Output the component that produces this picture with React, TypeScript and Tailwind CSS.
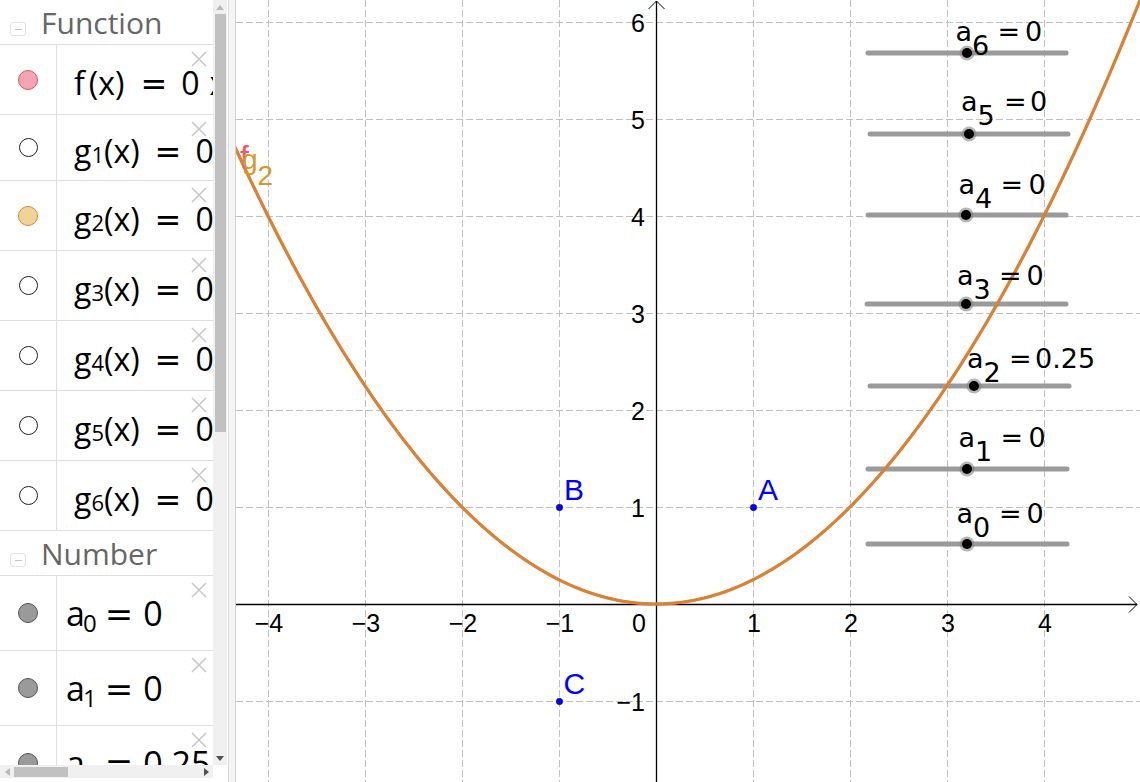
import React from 'react'

// graph coordinates: origin and pixels per unit
const OX = 656
const OY = 604
const U = 97

const sx = (x: number) => OX + x * U
const sy = (y: number) => OY - y * U

function parabola() {
  const d: string[] = []
  for (let i = 0; i <= 240; i++) {
    const x = -4.4 + (9.5 * i) / 240
    d.push(`${i === 0 ? 'M' : 'L'}${sx(x).toFixed(2)},${sy(0.25 * x * x).toFixed(2)}`)
  }
  return d.join(' ')
}

type CircleKind = 'f' | 'empty' | 'g2' | 'num'

const circleClass: Record<CircleKind, string> = {
  f: 'w-[20px] h-[20px] rounded-full bg-[#f6a4b1] border border-[#e0506a]',
  empty: 'w-[19px] h-[19px] rounded-full bg-white border border-[#222]',
  g2: 'w-[20px] h-[20px] rounded-full bg-[#ecd49b] border border-[#d98a2c]',
  num: 'w-[20px] h-[20px] rounded-full bg-[#9a9a9a] border border-[#555]',
}

const fnRows = [
  { h: 'h-[70px]', circle: 'f' as CircleKind, sub: '' },
  { h: 'h-[66px]', circle: 'empty' as CircleKind, sub: '1' },
  { h: 'h-[70px]', circle: 'g2' as CircleKind, sub: '2' },
  { h: 'h-[70px]', circle: 'empty' as CircleKind, sub: '3' },
  { h: 'h-[70px]', circle: 'empty' as CircleKind, sub: '4' },
  { h: 'h-[70px]', circle: 'empty' as CircleKind, sub: '5' },
  { h: 'h-[70px]', circle: 'empty' as CircleKind, sub: '6' },
]

const numRows = [
  { sub: '0', val: '0' },
  { sub: '1', val: '0' },
  { sub: '2', val: '0.25' },
]

const sliders = [
  { sub: '6', val: '0', y: 53, x1: 868, x2: 1066, dot: 967, ax: 955.5, base: 41, eq: 997.5, vx: 1025 },
  { sub: '5', val: '0', y: 134, x1: 870, x2: 1068, dot: 969, ax: 961, base: 111, eq: 1004, vx: 1030 },
  { sub: '4', val: '0', y: 215, x1: 868, x2: 1066, dot: 966, ax: 958.5, base: 194, eq: 1000.5, vx: 1028.5 },
  { sub: '3', val: '0', y: 304, x1: 867, x2: 1066, dot: 966, ax: 957, base: 285, eq: 999, vx: 1026.5 },
  { sub: '2', val: '0.25', y: 386, x1: 870, x2: 1069, dot: 974, ax: 967, base: 368, eq: 1009, vx: 1035 },
  { sub: '1', val: '0', y: 469, x1: 868, x2: 1067, dot: 967, ax: 958.5, base: 447, eq: 1000.5, vx: 1028.5 },
  { sub: '0', val: '0', y: 544, x1: 868, x2: 1067, dot: 967, ax: 956.5, base: 523, eq: 999, vx: 1026.5 },
]

function CloseX() {
  return (
    <svg className="absolute top-[6px] right-[6px]" width="16" height="16" viewBox="0 0 16 16">
      <path d="M1 1L15 15M15 1L1 15" stroke="#c8c8c8" strokeWidth="1.6" />
    </svg>
  )
}

function Header({ title, className }: { title: string; className: string }) {
  return (
    <div className={`flex items-start border-b border-[#dedede] pl-[10px] ${className}`}>
      <div className="mt-[22px] w-[16px] h-[14px] rounded-[3px] border border-[#e2e2e2] flex items-center justify-center">
        <div className="w-[7px] h-[1px] bg-[#c4c4c4]" />
      </div>
      <div className="ml-[15px] pt-[8px] leading-[30px] text-[30px] text-[#666] font-['Open_Sans',sans-serif]">
        {title}
      </div>
    </div>
  )
}

function Row({ className, circle, children }: { className: string; circle: CircleKind; children: React.ReactNode }) {
  return (
    <div className={`flex shrink-0 border-b border-[#dedede] ${className}`}>
      <div className="w-[57px] shrink-0 border-r border-[#dedede] flex items-center justify-center">
        <div className={circleClass[circle]} />
      </div>
      <div className="relative flex-1 flex items-center overflow-hidden">
        {children}
        <CloseX />
      </div>
    </div>
  )
}

function AlgebraPanel() {
  return (
    <div className="flex flex-col w-[227px] h-full shrink-0">
      <div className="flex h-[765px]">
        <div className="w-[213px] h-full overflow-hidden flex flex-col">
          <Header title="Function" className="h-[45px] shrink-0" />
          {fnRows.map((r, i) => (
            <Row key={i} className={r.h} circle={r.circle}>
              <div className="flex items-baseline whitespace-nowrap pl-[17px] pt-[8px] text-[32px] leading-none text-black font-['Open_Sans',sans-serif]">
                {r.sub === '' ? (
                  <>
                    <span>f</span>
                    <span className="ml-[4px]">(x)</span>
                    <span className="ml-[16px] font-['DejaVu_Sans',sans-serif]">=</span>
                    <span className="ml-[14px]">0</span>
                    <span className="ml-[10px]">x</span>
                  </>
                ) : (
                  <>
                    <span>g</span>
                    <span className="text-[22px]">{r.sub}</span>
                    <span>(x)</span>
                    <span className="ml-[15px] font-['DejaVu_Sans',sans-serif]">=</span>
                    <span className="ml-[14px]">0</span>
                  </>
                )}
              </div>
            </Row>
          ))}
          <Header title="Number" className="h-[45px] shrink-0" />
          {numRows.map((r, i) => (
            <Row key={i} className="h-[75px]" circle="num">
              <div className="flex items-baseline whitespace-nowrap pl-[9px] text-[34px] leading-none text-black font-['Open_Sans',sans-serif]">
                <span>a</span>
                <span className="text-[24px] translate-y-[6px] -ml-[2px]">{r.sub}</span>
                <span className="ml-[8px] font-['DejaVu_Sans',sans-serif]">=</span>
                <span className="ml-[10px]">{r.val}</span>
              </div>
            </Row>
          ))}
        </div>
        {/* vertical scrollbar */}
        <div className="w-[14px] h-full bg-[#f0f0f0] flex flex-col items-center">
          <div className="h-[14px] flex items-center justify-center">
            <svg width="8" height="5" viewBox="0 0 8 5"><path d="M0 5L4 0L8 5Z" fill="#b9b9b9" /></svg>
          </div>
          <div className="w-[11px] h-[418px] bg-[#c1c1c1]" />
          <div className="flex-1" />
          <div className="h-[14px] flex items-center justify-center">
            <svg width="8" height="5" viewBox="0 0 8 5"><path d="M0 0L8 0L4 5Z" fill="#505050" /></svg>
          </div>
        </div>
      </div>
      {/* horizontal scrollbar */}
      <div className="flex h-[17px]">
        <div className="w-[213px] h-[13px] bg-[#f0f0f0] flex items-center">
          <div className="w-[14px] flex items-center justify-center">
            <svg width="5" height="8" viewBox="0 0 5 8"><path d="M5 0L0 4L5 8Z" fill="#b9b9b9" /></svg>
          </div>
          <div className="w-[54px] h-[10px] bg-[#c1c1c1]" />
          <div className="flex-1" />
          <div className="w-[14px] flex items-center justify-center">
            <svg width="5" height="8" viewBox="0 0 5 8"><path d="M0 0L5 4L0 8Z" fill="#505050" /></svg>
          </div>
        </div>
        <div className="w-[14px]" />
      </div>
    </div>
  )
}

function Divider() {
  return (
    <div className="flex w-[9px] h-full shrink-0">
      <div className="w-[1px] bg-white" />
      <div className="w-[1px] bg-[#dcdcdc]" />
      <div className="w-[6px] bg-[#f4f4f4]" />
      <div className="w-[1px] bg-[#d2d2d2]" />
    </div>
  )
}

function Graphics() {
  const xs = [-4, -3, -2, -1, 1, 2, 3, 4]
  const ys = [-1, 1, 2, 3, 4, 5, 6]
  const curve = parabola()
  const axisFont = { fontFamily: '"Liberation Sans", Arial, sans-serif', fontSize: 25 }
  return (
    <div className="flex-1 h-full bg-white overflow-hidden">
      <svg width="904" height="782" viewBox="236 0 904 782">
        {/* grid */}
        <g stroke="#c0c0c0" strokeWidth="1" strokeDasharray="7 3">
          {xs.map((k) => (
            <line key={`vx${k}`} x1={sx(k) + 0.5} y1={0} x2={sx(k) + 0.5} y2={782} />
          ))}
          {ys.map((k) => (
            <line key={`hy${k}`} x1={236} y1={sy(k) + 0.5} x2={1140} y2={sy(k) + 0.5} />
          ))}
        </g>

        {/* axes */}
        <g stroke="#000" strokeWidth="1.3" fill="none">
          <line x1={236} y1={OY + 0.5} x2={1137} y2={OY + 0.5} />
          <line x1={OX + 0.5} y1={782} x2={OX + 0.5} y2={1} />
          <path d="M1129 596.5L1137 604.5L1129 612.5" strokeWidth="1" />
          <path d="M648.5 9L656.5 1L664.5 9" strokeWidth="1" />
        </g>

        {/* axis numbers */}
        <g {...axisFont} fill="#000">
          {xs.map((k) => (
            <text key={`lx${k}`} x={sx(k) + 1} y={632} textAnchor="middle">
              {k < 0 ? `\u2212${-k}` : `${k}`}
            </text>
          ))}
          <text x={639} y={632} textAnchor="middle">0</text>
          {ys.map((k) => (
            <text key={`ly${k}`} x={645} y={sy(k) + 10} textAnchor="end">
              {k < 0 ? `\u2212${-k}` : `${k}`}
            </text>
          ))}
        </g>

        {/* sliders */}
        {sliders.map((s) => (
          <g key={s.sub}>
            <line x1={s.x1} y1={s.y} x2={s.x2} y2={s.y} stroke="#9a9a9a" strokeWidth="5" strokeLinecap="round" />
            <circle cx={s.dot} cy={s.y} r="7.5" fill="#7a7a7a" fillOpacity="0.55" />
            <circle cx={s.dot} cy={s.y} r="5" fill="#000" />
          </g>
        ))}

        {/* f under g2 */}
        <path d={curve} stroke="#ec6a80" strokeWidth="3.2" fill="none" />
        <path d={curve} stroke="#d4891c" strokeWidth="2.4" fill="none" />

        {/* slider captions */}
        <g fontFamily='"DejaVu Sans", Verdana, sans-serif' fontSize="27" fill="#000">
          {sliders.map((s) => (
            <g key={`t${s.sub}`}>
              <text x={s.ax} y={s.base}>
                a<tspan dy="14">{s.sub}</tspan>
              </text>
              <text x={s.eq} y={s.base}>=</text>
              <text x={s.vx} y={s.base}>{s.val}</text>
            </g>
          ))}
        </g>

        {/* curve labels */}
        <g fontFamily='"Liberation Sans", Arial, sans-serif' fontSize="28">
          <text x={240} y={168} fontSize="32" fill="#f2546f">f</text>
          <text x={242} y={168.5} fill="#d8962a">
            g<tspan dy="16.5">2</tspan>
          </text>
        </g>

        {/* points */}
        <g fill="#0000ff" stroke="#00008b" strokeWidth="0.6">
          <circle cx={sx(1) + 0.5} cy={sy(1) + 0.5} r="3.2" />
          <circle cx={sx(-1) + 0.5} cy={sy(1) + 0.5} r="3.2" />
          <circle cx={sx(-1) + 0.5} cy={sy(-1) + 0.5} r="3.2" />
        </g>
        <g fontFamily='"Liberation Sans", Arial, sans-serif' fontSize="30" fill="#0000ff">
          <text x={758} y={500}>A</text>
          <text x={564} y={500}>B</text>
          <text x={563.5} y={694}>C</text>
        </g>
      </svg>
    </div>
  )
}

export default function App() {
  return (
    <div className="flex w-[1140px] h-[782px] overflow-hidden bg-white">
      <AlgebraPanel />
      <Divider />
      <Graphics />
    </div>
  )
}
